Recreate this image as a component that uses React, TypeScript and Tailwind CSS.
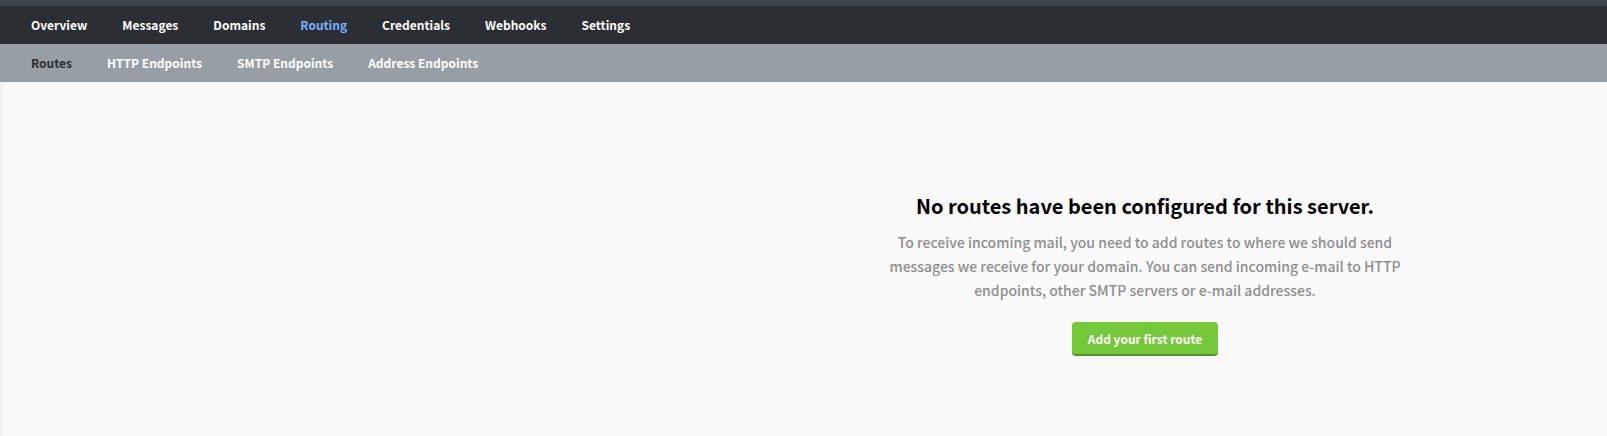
type NavItem = { label: string; href: string; active?: boolean };

const mainNav: NavItem[] = [
  { label: "Overview", href: "#overview" },
  { label: "Messages", href: "#messages" },
  { label: "Domains", href: "#domains" },
  { label: "Routing", href: "#routing", active: true },
  { label: "Credentials", href: "#credentials" },
  { label: "Webhooks", href: "#webhooks" },
  { label: "Settings", href: "#settings" },
];

const subNav: NavItem[] = [
  { label: "Routes", href: "#routes", active: true },
  { label: "HTTP Endpoints", href: "#http-endpoints" },
  { label: "SMTP Endpoints", href: "#smtp-endpoints" },
  { label: "Address Endpoints", href: "#address-endpoints" },
];

function NavBar({ label, items, className, activeClass }: { label: string; items: NavItem[]; className: string; activeClass: string }) {
  return (
    <nav aria-label={label} className={className}>
      <ul className="flex gap-[35px] px-[31px] text-[12px] font-bold leading-[38px]">
        {items.map((item) => (
          <li key={item.label}>
            <a
              href={item.href}
              aria-current={item.active ? "page" : undefined}
              className={item.active ? activeClass : "text-white"}
            >
              {item.label}
            </a>
          </li>
        ))}
      </ul>
    </nav>
  );
}

export default function App() {
  return (
    <div className="min-h-screen bg-[#fafafa] font-['Noto_Sans_CJK_SC','Noto_Sans',sans-serif] shadow-[inset_6px_0_5px_-4px_rgba(0,0,0,0.05)]">
      <header>
        <div className="h-1.5 bg-[#3c434a]" />
        <NavBar label="Server" items={mainNav} className="bg-[#2b2e32]" activeClass="text-[#77b0ff]" />
        <NavBar label="Routing" items={subNav} className="bg-[#979ea6]" activeClass="text-[#2b2e32]" />
      </header>
      <main className="flex justify-center pt-[108px] pb-16 pl-[42.5%]">
        <section className="flex w-[520px] flex-col items-center text-center">
          <h1 className="text-[20px] font-bold leading-8 text-black">No routes have been configured for this server.</h1>
          <p className="mt-2 text-[14px] font-medium leading-6 text-[#8e8e8e]">
            To receive incoming mail, you need to add routes to where we should send messages we receive for your
            domain. You can send incoming e-mail to HTTP endpoints, other SMTP servers or e-mail addresses.
          </p>
          <button
            type="button"
            className="mt-5 h-[34px] rounded border-b-2 border-[#549229] bg-[#76c83b] px-4 pt-0.5 text-[12px] font-bold text-white"
          >
            Add your first route
          </button>
        </section>
      </main>
    </div>
  );
}
